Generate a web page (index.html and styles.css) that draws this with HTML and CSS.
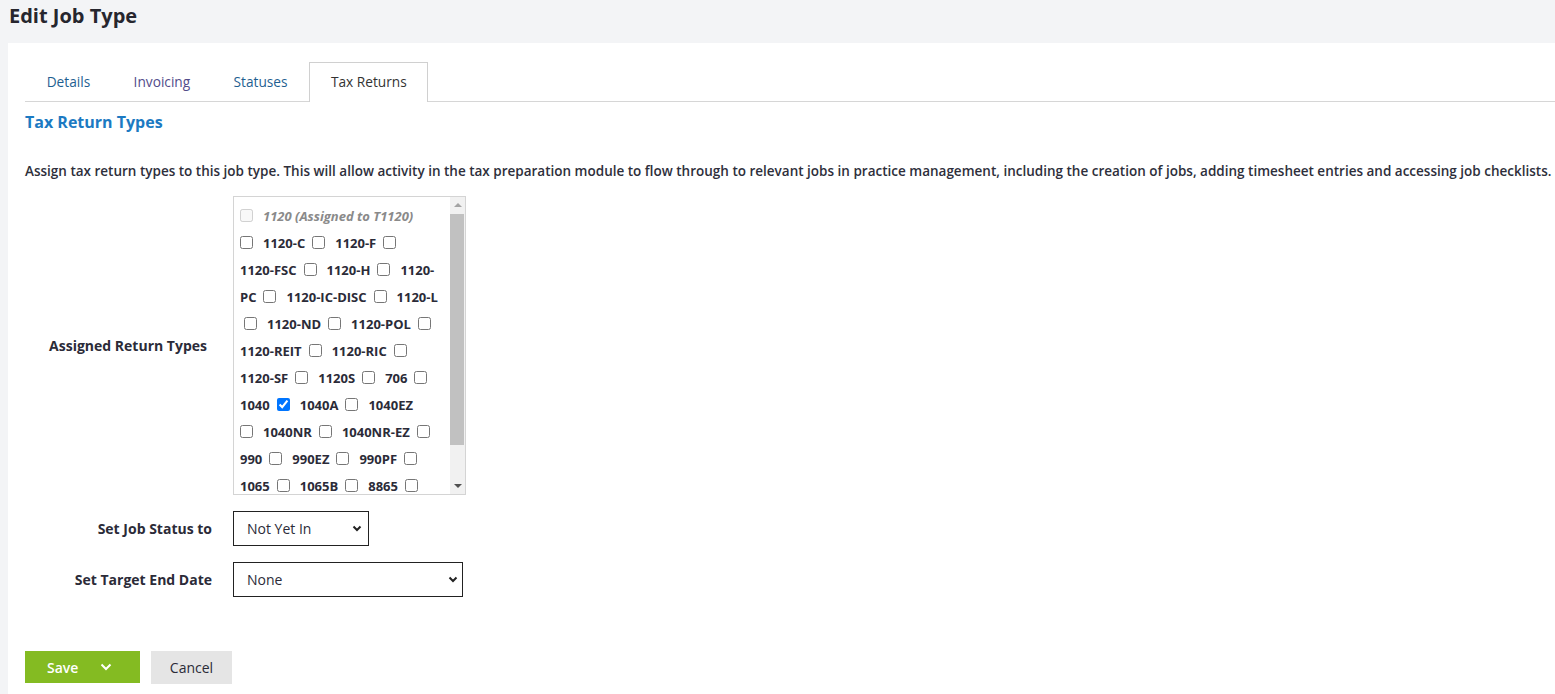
FILE: index.html
```html
<!DOCTYPE html>
<html lang="en">
<head>
    <meta charset="UTF-8">
    <title>Edit Job Type</title>
    <link rel="stylesheet" href="styles.css">
</head>
<body>
    <div class="page-head">
        <h1>Edit Job Type</h1>
    </div>
    <div class="panel">
        <!-- Tabs -->
        <ul class="tabs">
            <li><a href="#" class="tab-link">Details</a></li>
            <li><a href="#" class="tab-link seen">Invoicing</a></li>
            <li><a href="#" class="tab-link">Statuses</a></li>
            <li class="active"><a href="#" class="tab-link">Tax Returns</a></li>
        </ul>

        <h2 class="section-title">Tax Return Types</h2>
        <p class="intro">Assign tax return types to this job type. This will allow activity in the tax preparation module to flow through to relevant jobs in practice management, including the creation of jobs, adding timesheet entries and accessing job checklists.</p>

        <div class="form-grid">
            <label class="field-label assigned">Assigned Return Types</label>
            <div class="return-box">
                <div class="return-list">
                    <div class="rt-row"><input type="checkbox" disabled><label class="taken">1120 (Assigned to T1120)</label></div>
                    <div class="rt-row"><input type="checkbox"><label>1120-C</label><input type="checkbox"><label>1120-F</label><input type="checkbox"></div>
                    <div class="rt-row"><label>1120-FSC</label><input type="checkbox"><label>1120-H</label><input type="checkbox"><label>1120-</label></div>
                    <div class="rt-row"><label>PC</label><input type="checkbox"><label>1120-IC-DISC</label><input type="checkbox"><label>1120-L</label></div>
                    <div class="rt-row indent"><input type="checkbox"><label>1120-ND</label><input type="checkbox"><label>1120-POL</label><input type="checkbox"></div>
                    <div class="rt-row"><label>1120-REIT</label><input type="checkbox"><label>1120-RIC</label><input type="checkbox"></div>
                    <div class="rt-row"><label>1120-SF</label><input type="checkbox"><label>1120S</label><input type="checkbox"><label>706</label><input type="checkbox"></div>
                    <div class="rt-row"><label>1040</label><input type="checkbox" checked><label>1040A</label><input type="checkbox"><label>1040EZ</label></div>
                    <div class="rt-row"><input type="checkbox"><label>1040NR</label><input type="checkbox"><label>1040NR-EZ</label><input type="checkbox"></div>
                    <div class="rt-row"><label>990</label><input type="checkbox"><label>990EZ</label><input type="checkbox"><label>990PF</label><input type="checkbox"></div>
                    <div class="rt-row"><label>1065</label><input type="checkbox"><label>1065B</label><input type="checkbox"><label>8865</label><input type="checkbox"></div>
                    <div class="rt-row"><label>1041</label><input type="checkbox"><label>709</label><input type="checkbox"><label>5500</label></div>
                </div>
                <!-- scrollbar look-alike -->
                <div class="scrollbar">
                    <span class="sb-up"></span>
                    <span class="sb-track"><span class="sb-thumb"></span></span>
                    <span class="sb-down"></span>
                </div>
            </div>

            <label class="field-label">Set Job Status to</label>
            <div class="select-wrap status">
                <select>
                    <option>Not Yet In</option>
                </select>
                <svg class="chev" width="10" height="7" viewBox="0 0 10 7"><path d="M1.5 1.5 L5 5 L8.5 1.5" fill="none" stroke="#222" stroke-width="2"/></svg>
            </div>

            <label class="field-label">Set Target End Date</label>
            <div class="select-wrap target">
                <select>
                    <option>None</option>
                </select>
                <svg class="chev" width="10" height="7" viewBox="0 0 10 7"><path d="M1.5 1.5 L5 5 L8.5 1.5" fill="none" stroke="#222" stroke-width="2"/></svg>
            </div>
        </div>

        <div class="actions">
            <button class="btn-save">Save
                <svg width="12" height="8" viewBox="0 0 12 8"><path d="M1.5 1.5 L6 6 L10.5 1.5" fill="none" stroke="#fff" stroke-width="2"/></svg>
            </button>
            <button class="btn-cancel">Cancel</button>
        </div>
    </div>
</body>
</html>
```

FILE: styles.css
```css
body {
    font-family: "Open Sans", Arial, sans-serif;
    background-color: #f3f4f6;
    margin: 0;
    padding: 0;
    color: #2e2f3b;
}
.page-head {
    height: 43px;
}
.page-head h1 {
    margin: 0;
    padding: 3px 9px;
    font-size: 20px;
    line-height: 25px;
    font-weight: 700;
    color: #26262e;
}
.panel {
    margin-left: 8px;
    background-color: #fff;
    min-height: 651px;
    padding: 19px 0 0 17px;
}
/* Tabs */
.tabs {
    display: flex;
    margin: 0;
    padding: 0;
    list-style: none;
    border-bottom: 1px solid #d6d6d6;
}
.tabs li {
    margin-bottom: -1px;
}
.tab-link {
    display: block;
    padding: 0 20.7px 2px;
    line-height: 37px;
    font-size: 13.7px;
    color: #1f5f91;
    text-decoration: none;
    border: 1px solid transparent;
    border-bottom: none;
}
.tab-link.seen {
    color: #524c8a;
}
.tabs .active .tab-link {
    color: #333;
    background-color: #fff;
    border-color: #d0d0d0;
}
.section-title {
    margin: 10px 0 0;
    font-size: 16px;
    line-height: 20px;
    font-weight: 700;
    color: #1c7ac2;
}
.intro {
    margin: 29px 0 0;
    font-size: 13.5px;
    line-height: 20px;
    font-weight: 600;
    white-space: nowrap;
}
/* Form */
.form-grid {
    display: grid;
    grid-template-columns: 187px 1fr;
    column-gap: 21px;
    row-gap: 16px;
    margin-top: 15px;
    align-items: center;
}
.field-label {
    text-align: right;
    font-size: 14px;
    font-weight: 700;
    color: #2b2b38;
}
.field-label.assigned {
    padding-right: 5px;
}
.return-box {
    box-sizing: border-box;
    display: flex;
    width: 233px;
    height: 299px;
    border: 1px solid #d4d4d4;
}
.return-list {
    flex: 1;
    overflow: hidden;
    padding: 5px 0 0 6px;
    font-size: 13px;
}
.rt-row {
    display: flex;
    align-items: center;
    height: 27px;
    white-space: nowrap;
}
.rt-row.indent {
    padding-left: 4px;
}
.rt-row input {
    width: 13px;
    height: 13px;
    margin: 0 10px 0 7px;
    flex: none;
}
.rt-row input:first-child {
    margin-left: 0;
}
.rt-row label {
    font-weight: 700;
    color: #2b2b38;
}
.rt-row label.taken {
    font-style: italic;
    color: #8a8a8a;
}
.scrollbar {
    display: flex;
    flex-direction: column;
    width: 15px;
    background-color: #f1f1f1;
}
.sb-up,
.sb-down {
    display: block;
    width: 0;
    height: 0;
    border-left: 4px solid transparent;
    border-right: 4px solid transparent;
}
.sb-up {
    margin: 6px auto 7px;
    border-bottom: 4px solid #a3a3a3;
}
.sb-down {
    margin: 7px auto 6px;
    border-top: 4px solid #505050;
}
.sb-track {
    display: block;
    flex: 1;
}
.sb-thumb {
    display: block;
    height: 231px;
    margin: 0 1px 0 0;
    background-color: #c1c1c1;
}
.select-wrap {
    position: relative;
    height: 35px;
}
.select-wrap select {
    -webkit-appearance: none;
    appearance: none;
    box-sizing: border-box;
    height: 35px;
    padding: 0 30px 0 13px;
    border: 1px solid #222;
    border-radius: 0;
    background-color: #fff;
    font-family: inherit;
    font-size: 14px;
    color: #2b2b38;
}
.status select {
    width: 136px;
}
.target select {
    width: 230px;
}
.chev {
    position: absolute;
    top: 14px;
    pointer-events: none;
}
.status .chev {
    left: 119px;
}
.target .chev {
    left: 215px;
}
/* Buttons */
.actions {
    display: flex;
    gap: 11px;
    margin-top: 54px;
}
.btn-save {
    display: flex;
    align-items: center;
    height: 32px;
    width: 115px;
    padding: 0 0 0 22px;
    border: none;
    background-color: #84bb22;
    color: #fff;
    font-family: inherit;
    font-size: 14px;
    font-weight: 600;
}
.btn-save svg {
    margin-left: 22px;
}
.btn-cancel {
    height: 33px;
    width: 81px;
    border: none;
    background-color: #e5e5e5;
    color: #2b2b38;
    font-family: inherit;
    font-size: 14px;
}
```
